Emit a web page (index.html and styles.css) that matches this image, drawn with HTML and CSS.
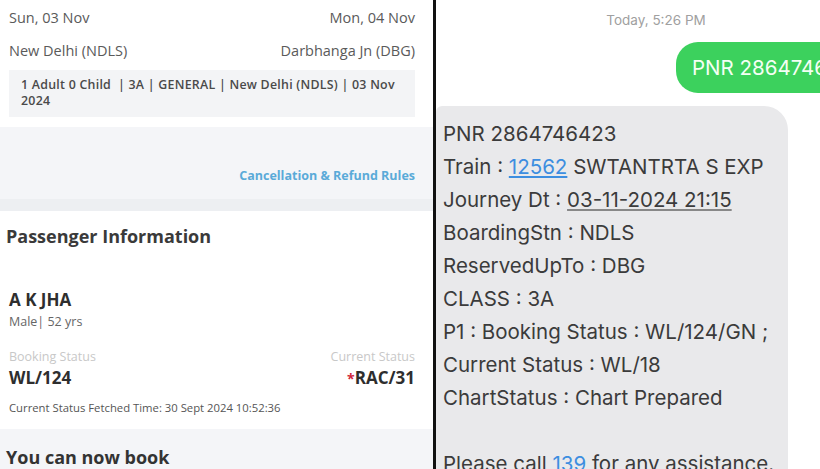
FILE: index.html
```html
<!DOCTYPE html>
<html lang="en">
<head>
    <meta charset="UTF-8">
    <meta name="viewport" content="width=device-width, initial-scale=1.0">
    <title>PNR Status</title>
    <link rel="stylesheet" href="styles.css">
</head>
<body>
    <div class="split">
        <div class="booking">
            <div class="journey">
                <div class="row dates">
                    <span>Sun, 03 Nov</span>
                    <span>Mon, 04 Nov</span>
                </div>
                <div class="row stations">
                    <span>New Delhi (NDLS)</span>
                    <span>Darbhanga Jn (DBG)</span>
                </div>
                <div class="summary">
                    1 Adult 0 Child &nbsp;| 3A | GENERAL | New Delhi (NDLS) | 03 Nov 2024
                </div>
            </div>

            <div class="rules">
                <a href="#">Cancellation &amp; Refund Rules</a>
            </div>

            <div class="passengers">
                <h2>Passenger Information</h2>
                <div class="passenger">
                    <p class="name">A K JHA</p>
                    <p class="meta">Male| 52 yrs</p>
                    <div class="row labels">
                        <span>Booking Status</span>
                        <span>Current Status</span>
                    </div>
                    <div class="row status">
                        <span>WL/124</span>
                        <span><i class="star">*</i>RAC/31</span>
                    </div>
                    <p class="fetched">Current Status Fetched Time: 30 Sept 2024 10:52:36</p>
                </div>
            </div>

            <div class="book-now">
                <h2>You can now book</h2>
            </div>
        </div>

        <div class="divider"></div>

        <div class="messages">
            <p class="timestamp">Today, 5:26 PM</p>
            <div class="sent">PNR 2864746423</div>
            <div class="received">
                <p>PNR 2864746423</p>
                <p>Train : <a href="#">12562</a> SWTANTRTA S EXP</p>
                <p>Journey Dt : <span class="date">03-11-2024 21:15</span></p>
                <p>BoardingStn : NDLS</p>
                <p>ReservedUpTo : DBG</p>
                <p>CLASS : 3A</p>
                <p>P1 : Booking Status : WL/124/GN ;</p>
                <p>Current Status : WL/18</p>
                <p>ChartStatus : Chart Prepared</p>
                <p>&nbsp;</p>
                <p>Please call <a href="#">139</a> for any assistance.</p>
            </div>
        </div>
    </div>
</body>
</html>
```

FILE: styles.css
```css
html, body {
    margin: 0;
    height: 100%;
    overflow: hidden;
}
body {
    font-family: "Open Sans", "Noto Sans", sans-serif;
    background-color: white;
}
p {
    margin: 0;
}
.split {
    display: flex;
    height: 469px;
}
.booking {
    width: 433px;
    flex-shrink: 0;
    background-color: #f4f5f8;
    display: flex;
    flex-direction: column;
}
.divider {
    width: 3px;
    flex-shrink: 0;
    background-color: #111;
}
.row {
    display: flex;
    justify-content: space-between;
}

/* journey card */
.journey {
    background-color: white;
    padding: 8px 18px 10px 9px;
    height: 127px;
    box-sizing: border-box;
}
.dates, .stations {
    font-size: 14.5px;
    color: #5a5a5a;
    line-height: 20px;
}
.stations {
    margin-top: 13px;
}
.summary {
    margin-top: 9px;
    background-color: #f3f4f6;
    padding: 7px 14px 0 12px;
    font-size: 12.4px;
    letter-spacing: 0.25px;
    font-weight: 600;
    color: #4a4a4a;
    line-height: 16px;
    height: 47px;
    box-sizing: border-box;
}

/* rules */
.rules {
    height: 84px;
    box-sizing: border-box;
    padding: 36px 18px 0 0;
    text-align: right;
    border-bottom: 12px solid #edeff2;
}
.rules a {
    color: #5aaad8;
    font-size: 12.5px;
    font-weight: 700;
    text-decoration: none;
}

/* passengers */
.passengers {
    background-color: white;
    padding: 13px 18px 0 6px;
    height: 218px;
    box-sizing: border-box;
}
.passengers h2 {
    margin: 0;
    font-size: 18px;
    line-height: 24px;
    font-weight: 700;
    color: #3a3a3a;
}
.passenger {
    padding: 41px 0 0 3px;
}
.name {
    font-size: 17px;
    font-weight: 700;
    color: #2e2e2e;
    line-height: 22px;
}
.meta {
    margin-top: 2px;
    font-size: 12.5px;
    color: #666;
    line-height: 18px;
}
.labels {
    margin-top: 17px;
    font-size: 12.5px;
    line-height: 18px;
    color: #c8c8c8;
}
.status {
    margin-top: 1px;
    font-size: 17px;
    font-weight: 700;
    color: #2e2e2e;
    line-height: 22px;
}
.star {
    font-style: normal;
    font-size: 14px;
    color: #d0253a;
}
.fetched {
    margin-top: 10px;
    font-size: 11.3px;
    line-height: 16px;
    color: #555;
}
.book-now {
    padding: 16px 0 0 6px;
}
.book-now h2 {
    margin: 0;
    font-size: 18px;
    line-height: 24px;
    font-weight: 700;
    color: #333;
}

/* messages */
.messages {
    flex: 1;
    min-width: 0;
    background-color: white;
    font-family: Inter, "Liberation Sans", sans-serif;
    overflow: hidden;
}
.timestamp {
    text-align: center;
    font-size: 13.5px;
    color: #a0a0a0;
    line-height: 18px;
    padding: 11px 0 0 56px;
    height: 29px;
    box-sizing: border-box;
}
.sent {
    margin-left: 240px;
    margin-top: 13px;
    width: 200px;
    background-color: #3cd15d;
    color: #f4fff4;
    font-size: 20.5px;
    line-height: 51px;
    height: 51px;
    padding-left: 16px;
    border-radius: 22px;
    white-space: nowrap;
}
.received {
    margin-top: 13px;
    width: 345px;
    background-color: #e9e9eb;
    border-radius: 6px 24px 0 0;
    padding: 11px 0 0 7px;
    height: 360px;
    font-size: 20.5px;
    line-height: 33px;
    color: #3b3b3b;
    white-space: nowrap;
}
.received a {
    color: #3d8ee0;
}
.received .date {
    text-decoration: underline;
    text-decoration-color: #888;
}
```
